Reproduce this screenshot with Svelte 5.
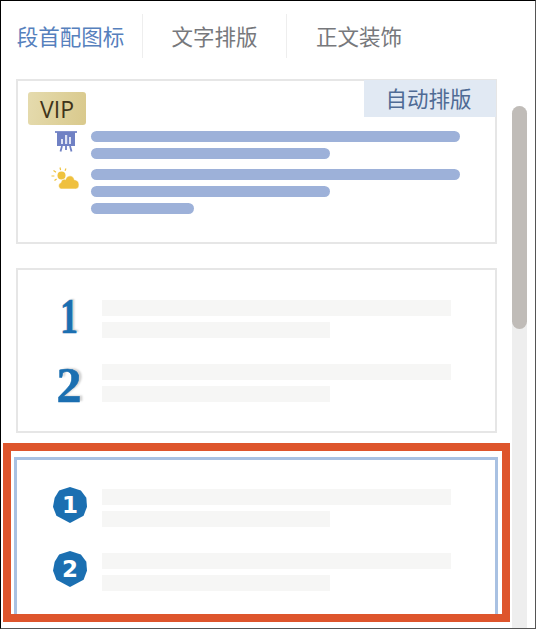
<script>
const tabs = ['段首配图标', '文字排版', '正文装饰'];
const badge = [1, 2];
</script>

<div class="panel">
  <div class="tabs">
    {#each tabs as tab, i}
      <div class="tab" class:active={i === 0}>{tab}</div>
    {/each}
  </div>

  <div class="main">
    <div class="list">
      <div class="card first">
        <span class="vip">VIP</span>
        <span class="auto">自动排版</span>

        <div class="para">
          <div class="ico">
            <svg width="22" height="21" viewBox="0 0 22 21">
              <rect x="0" y="0" width="22" height="2" fill="#8392cd" />
              <rect x="2" y="1" width="18" height="14" fill="#7081c4" />
              <rect x="6" y="8" width="2" height="5" fill="#dfe3f3" />
              <rect x="10" y="4" width="2.2" height="9" fill="#dfe3f3" />
              <rect x="14" y="6" width="2" height="7" fill="#dfe3f3" />
              <path d="M7 15 L5.5 20.5 M15 15 L16.5 20.5 M11 15 V19" stroke="#7081c4" stroke-width="1.8" fill="none" />
            </svg>
          </div>
          <div class="lines">
            <i class="long"></i>
            <i class="mid"></i>
          </div>
        </div>

        <div class="para">
          <div class="ico">
            <svg width="28" height="22" viewBox="0 0 28 22">
              <circle cx="10.5" cy="8.5" r="4" fill="#efc33f" />
              <path d="M9 0.5 L9.6 3.2 M2.5 3.5 L5 5.2 M0.5 9 L3.4 9 M3.5 13.5 L5.6 12 M15 1.5 L14 3.8" stroke="#efc33f" stroke-width="1.2" fill="none" />
              <path d="M10.5 22 C7 22 6.5 16.5 10 15.6 C10.2 12.6 13 11.6 14.5 12.6 C16 7.4 22.6 7.8 23.4 12.8 C27 13.2 28 15.6 28 18 C28 20.4 26.6 22 24.6 22 Z" fill="#efc03e" stroke="#fff" stroke-width="0.6" />
            </svg>
          </div>
          <div class="lines">
            <i class="long"></i>
            <i class="mid"></i>
            <i class="short"></i>
          </div>
        </div>
      </div>

      <div class="card plain">
        {#each badge as n}
          <div class="row">
            <span class="num" class:one={n === 1}>{n}</span>
            <div class="ghost">
              <i class="wide"></i>
              <i class="half"></i>
            </div>
          </div>
        {/each}
      </div>

      <div class="card selected">
        {#each badge as n}
          <div class="row">
            <span class="hex">{n}</span>
            <div class="ghost">
              <i class="wide"></i>
              <i class="half"></i>
            </div>
          </div>
        {/each}
      </div>
    </div>

    <div class="scroll">
      <div class="thumb"></div>
    </div>
  </div>

  <div class="mark"></div>
</div>

<style>
:global(body) {
  background: #fff;
}

.panel {
  background: #fff;
  border-bottom: solid 1px #555;
  border-left: solid 1px #000;
  border-right: solid 1px #555;
  border-top: solid 1px #000;
  box-sizing: border-box;
  font-family: 'Noto Sans CJK SC', sans-serif;
  height: 629px;
  overflow: hidden;
  position: relative;
  width: 536px;
}

.tabs {
  display: flex;
  flex-direction: row;
  height: 44px;
  padding-top: 13px;
  margin-bottom: 21px;
}

.tab {
  border-right: solid 1px #eeeeee;
  box-sizing: border-box;
  color: #77787c;
  font-size: 21.5px;
  line-height: 44px;
  text-align: center;
  width: 144px;
}

.tab:first-child {
  padding-right: 2px;
  width: 142px;
}

.tab:last-child {
  border-right: none;
}

.tab.active {
  color: #5680bd;
}

.main {
  display: flex;
  flex-direction: row;
}

.list {
  display: flex;
  flex-direction: column;
  gap: 24px;
  margin-left: 15px;
  width: 481px;
}

.card {
  border: solid 2px #e6e6e6;
  box-sizing: border-box;
  flex-shrink: 0;
  height: 165px;
  position: relative;
}

.first {
  padding-top: 50px;
}

.para {
  display: flex;
  flex-direction: row;
  margin-bottom: 10px;
}

.ico {
  box-sizing: border-box;
  display: flex;
  justify-content: flex-end;
  margin-top: -2px;
  padding-right: 12px;
  width: 73px;
  height: 22px;
}

.para:first-of-type .ico {
  padding-right: 14px;
  margin-top: 0;
}

.lines {
  display: flex;
  flex-direction: column;
  gap: 6px;
}

.lines i {
  background: #9db1d9;
  border-radius: 6px;
  display: block;
  height: 11px;
}

.long {
  width: 369px;
}

.mid {
  width: 239px;
}

.short {
  width: 103px;
}

.vip {
  align-items: center;
  background: linear-gradient(100deg, #e5dbae, #d9c98c);
  border-radius: 3px;
  color: #40341a;
  display: flex;
  font-family: 'Open Sans', sans-serif;
  font-size: 23px;
  height: 33px;
  justify-content: center;
  left: 10px;
  position: absolute;
  top: 11px;
  width: 58px;
}

.auto {
  background: #e1e9f3;
  color: #4f6b95;
  font-size: 21.5px;
  height: 37px;
  line-height: 36px;
  padding-right: 3px;
  box-sizing: border-box;
  position: absolute;
  right: -1px;
  text-align: center;
  top: -1px;
  width: 132px;
}

.plain {
  padding: 30px 0 0 33px;
}

.selected {
  border: solid 3px #a9c1e2;
  margin: 0 -1px 0 -2px;
  padding: 29px 0 0 34px;
}

.row {
  align-items: flex-start;
  display: flex;
  flex-direction: row;
  gap: 15px;
  height: 38px;
  margin-bottom: 26px;
}

.num {
  -webkit-text-stroke: 0.6px #1b6fb1;
  color: #1b6fb1;
  font-family: 'Liberation Serif', serif;
  font-size: 50px;
  font-weight: 700;
  line-height: 38px;
  position: relative;
  text-align: center;
  text-shadow: 3px -1px 2px #d4d4d4;
  top: 2px;
  width: 36px;
}

.num.one {
  top: -3px;
  transform: scaleX(0.72);
}

.hex {
  background: #1b6fb1;
  clip-path: polygon(50% 0, 82% 10%, 98% 30%, 100% 55%, 90% 80%, 50% 100%, 10% 80%, 0 55%, 5% 30%, 18% 10%);
  color: #fff;
  flex-shrink: 0;
  font-family: 'DejaVu Sans', sans-serif;
  font-size: 23px;
  font-weight: 700;
  height: 36px;
  line-height: 36px;
  margin: -2px 0 0 2px;
  text-align: center;
  width: 34px;
}

.ghost {
  display: flex;
  flex-direction: column;
  gap: 6px;
}

.ghost i {
  background: #f6f6f5;
  display: block;
  height: 16px;
}

.wide {
  width: 349px;
}

.half {
  width: 228px;
}

.scroll {
  background: #eeeeee;
  border-radius: 8px 8px 0 0;
  height: 540px;
  margin: 27px 0 0 15px;
  width: 15px;
}

.thumb {
  background: #c0bcb8;
  border-radius: 8px;
  height: 223px;
}

.mark {
  border: solid 8px #de552c;
  box-sizing: border-box;
  height: 179px;
  left: 2px;
  position: absolute;
  top: 442px;
  width: 507px;
}
</style>
